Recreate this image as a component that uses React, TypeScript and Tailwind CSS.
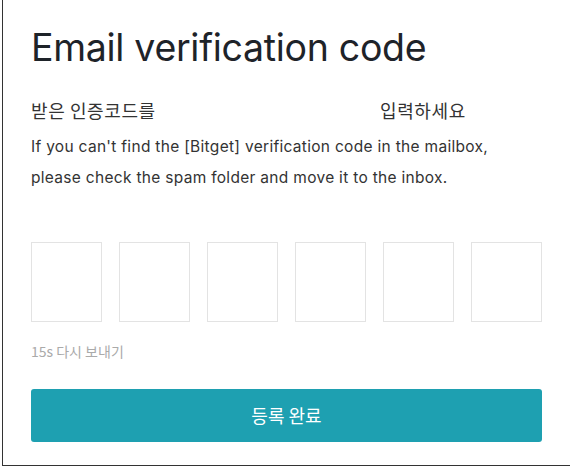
export default function App() {
  const boxes = [0, 1, 2, 3, 4, 5];
  return (
    <div className="w-[578px] h-[467px] bg-white" style={{ fontFamily: 'Inter, "Noto Sans CJK KR", sans-serif' }}>
      <div className="ml-[2px] w-[568px] h-[466px] border-l border-b border-[#333] pl-[28px] pr-[27px] flex flex-col">
        <h1 className="mt-[24px] text-[37.5px] leading-[48px] text-[#1e2329] tracking-[-0.3px]">Email verification code</h1>
        <div className="mt-[26px] flex text-[18px] leading-[24px] text-[#333] tracking-[0.6px]" style={{ fontFamily: '"Noto Sans CJK KR", sans-serif' }}>
          <span className="w-[349px]">받은 인증코드를</span>
          <span>입력하세요</span>
        </div>
        <p className="mt-[9px] text-[15.5px] leading-[31px] text-[#333] tracking-[0.3px]">
          If you can't find the [Bitget] verification code in the mailbox,
          <br />
          please check the spam folder and move it to the inbox.
        </p>
        <div className="mt-[49px] flex gap-[17px]">
          {boxes.map((b) => (
            <div key={b} className="w-[71px] h-[80px] border border-[#e3e3e3]" />
          ))}
        </div>
        <div className="mt-[19px] text-[14px] leading-[20px] text-[#aaaaaa]" style={{ fontFamily: '"Noto Sans CJK KR", sans-serif' }}>15s 다시 보내기</div>
        <button className="mt-[28px] w-[511px] h-[53px] rounded-[3px] bg-[#1ea0b1] text-white text-[18px]" style={{ fontFamily: '"Noto Sans CJK KR", sans-serif' }}>
          등록 완료
        </button>
      </div>
    </div>
  );
}
